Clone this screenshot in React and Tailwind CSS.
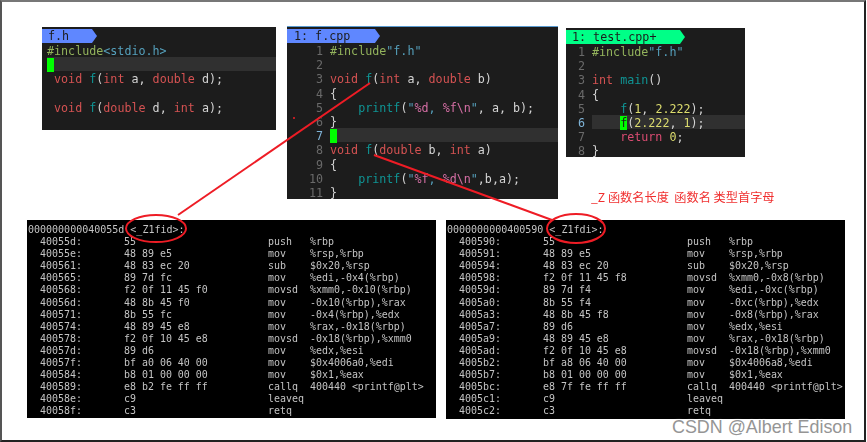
const cn = {
  fn: "text-[#0f9595]",
  kw: "text-[#d45252]",
  inc: "text-[#93b35c]",
  str: "text-[#55a0bc]",
  txt: "text-[#d4d4d4]",
  num: "text-[#dcdc6e]",
  ret: "text-[#dc4c72]",
  pct: "text-[#d46ea4]",
};

function Tab({ label, green, width, inset }) {
  return (
    <div className="flex h-[14px]">
      <div className={`${green ? "bg-[#00ff87]" : "bg-[#5f87ff]"} ${width} ${inset} h-[14px] text-[#1c1c1c] whitespace-pre`}>{label}</div>
      <div
        className={`h-0 w-0 border-y-[7px] border-l-[5px] border-y-transparent ${
          green ? "border-l-[#00ff87]" : "border-l-[#5f87ff]"
        }`}
      />
    </div>
  );
}

function CodeLine({ num, active, numWidth, parts, cursorLine }) {
  return (
    <div className="flex h-[14.2px] leading-[16px] whitespace-pre">
      {numWidth && (
        <div className={`${numWidth} shrink-0 pr-[7px] text-right ${active ? "text-[#7fb4d8]" : "text-[#6a6a6a]"}`}>
          {num}
        </div>
      )}
      <div className={`flex-1 ${cursorLine ? "bg-[#303030]" : ""}`}>
        {parts &&
          parts.map((p, i) =>
            p.cursor ? (
              <span key={i} className="bg-[#00ff00] text-[#1c1c1c]">
                {p.t}
              </span>
            ) : (
              <span key={i} className={p.c || cn.txt}>
                {p.t}
              </span>
            )
          )}
      </div>
    </div>
  );
}

const p = (t, c) => ({ t, c });
const cursor = (t) => ({ t, cursor: true });

const headerLines = [
  { parts: [p("#include", cn.inc), p("<stdio.h>", cn.str)] },
  { parts: [cursor(" ")], cursorLine: true },
  { parts: [p(" void ", cn.kw), p("f", cn.fn), p("("), p("int", cn.kw), p(" a, "), p("double", cn.kw), p(" d);")] },
  { parts: [] },
  { parts: [p(" void ", cn.kw), p("f", cn.fn), p("("), p("double", cn.kw), p(" d, "), p("int", cn.kw), p(" a);")] },
];

const cppLines = [
  { parts: [p("#include", cn.inc), p('"f.h"', cn.str)] },
  { parts: [] },
  { parts: [p("void ", cn.kw), p("f", cn.fn), p("("), p("int", cn.kw), p(" a, "), p("double", cn.kw), p(" b)")] },
  { parts: [p("{")] },
  { parts: [p("    printf", cn.fn), p("("), p('"', cn.str), p("%d", cn.pct), p(", ", cn.str), p("%f\\n", cn.pct), p('"', cn.str), p(", a, b);")] },
  { parts: [p("}")] },
  { parts: [cursor(" ")], cursorLine: true, active: true },
  { parts: [p("void ", cn.kw), p("f", cn.fn), p("("), p("double", cn.kw), p(" b, "), p("int", cn.kw), p(" a)")] },
  { parts: [p("{")] },
  { parts: [p("    printf", cn.fn), p("("), p('"', cn.str), p("%f", cn.pct), p(", ", cn.str), p("%d\\n", cn.pct), p('"', cn.str), p(",b,a);")] },
  { parts: [p("}")] },
];

const testLines = [
  { parts: [p("#include", cn.inc), p('"f.h"', cn.str)] },
  { parts: [] },
  { parts: [p("int ", cn.kw), p("main", cn.fn), p("()")] },
  { parts: [p("{")] },
  { parts: [p("    "), p("f", cn.fn), p("("), p("1", cn.num), p(", "), p("2.222", cn.num), p(");")] },
  { parts: [p("    "), cursor("f"), p("("), p("2.222", cn.num), p(", "), p("1", cn.num), p(");")], cursorLine: true, active: true },
  { parts: [p("    "), p("return", cn.ret), p(" "), p("0", cn.num), p(";")] },
  { parts: [p("}")] },
];

function VimPanel({ tab, green, tabWidth, tabInset, lines, numWidth, className, bodyClass }) {
  return (
    <div className={`bg-[#1c1c1c] pt-[2px] font-['DejaVu_Sans_Mono',monospace] text-[11.7px] leading-[14px] ${className}`}>
      <Tab label={tab} green={green} width={tabWidth} inset={tabInset} />
      <div className={bodyClass}>
        {lines.map((l, i) => (
          <CodeLine key={i} num={i + 1} numWidth={numWidth} {...l} />
        ))}
      </div>
    </div>
  );
}

const dump1 = [
  ["40055d:", "55", "push", "%rbp"],
  ["40055e:", "48 89 e5", "mov", "%rsp,%rbp"],
  ["400561:", "48 83 ec 20", "sub", "$0x20,%rsp"],
  ["400565:", "89 7d fc", "mov", "%edi,-0x4(%rbp)"],
  ["400568:", "f2 0f 11 45 f0", "movsd", "%xmm0,-0x10(%rbp)"],
  ["40056d:", "48 8b 45 f0", "mov", "-0x10(%rbp),%rax"],
  ["400571:", "8b 55 fc", "mov", "-0x4(%rbp),%edx"],
  ["400574:", "48 89 45 e8", "mov", "%rax,-0x18(%rbp)"],
  ["400578:", "f2 0f 10 45 e8", "movsd", "-0x18(%rbp),%xmm0"],
  ["40057d:", "89 d6", "mov", "%edx,%esi"],
  ["40057f:", "bf a0 06 40 00", "mov", "$0x4006a0,%edi"],
  ["400584:", "b8 01 00 00 00", "mov", "$0x1,%eax"],
  ["400589:", "e8 b2 fe ff ff", "callq", "400440 <printf@plt>"],
  ["40058e:", "c9", "leaveq", ""],
  ["40058f:", "c3", "retq", ""],
];

const dump2 = [
  ["400590:", "55", "push", "%rbp"],
  ["400591:", "48 89 e5", "mov", "%rsp,%rbp"],
  ["400594:", "48 83 ec 20", "sub", "$0x20,%rsp"],
  ["400598:", "f2 0f 11 45 f8", "movsd", "%xmm0,-0x8(%rbp)"],
  ["40059d:", "89 7d f4", "mov", "%edi,-0xc(%rbp)"],
  ["4005a0:", "8b 55 f4", "mov", "-0xc(%rbp),%edx"],
  ["4005a3:", "48 8b 45 f8", "mov", "-0x8(%rbp),%rax"],
  ["4005a7:", "89 d6", "mov", "%edx,%esi"],
  ["4005a9:", "48 89 45 e8", "mov", "%rax,-0x18(%rbp)"],
  ["4005ad:", "f2 0f 10 45 e8", "movsd", "-0x18(%rbp),%xmm0"],
  ["4005b2:", "bf a8 06 40 00", "mov", "$0x4006a8,%edi"],
  ["4005b7:", "b8 01 00 00 00", "mov", "$0x1,%eax"],
  ["4005bc:", "e8 7f fe ff ff", "callq", "400440 <printf@plt>"],
  ["4005c1:", "c9", "leaveq", ""],
  ["4005c2:", "c3", "retq", ""],
];

function Terminal({ title, rows, className }) {
  return (
    <div className={`bg-black pl-[1px] pt-[3px] font-['DejaVu_Sans_Mono',monospace] text-[9.95px] text-[#c4c4c4] whitespace-pre ${className}`}>
      <div className="h-[12.1px] text-[10px] leading-[13px]">{title}</div>
      {rows.map((r) => (
        <div key={r[0]} className="flex h-[12.1px] leading-[13px]">
          <div className="w-[96px] shrink-0 pl-[12px]">{r[0]}</div>
          <div className="w-[144px] shrink-0">{r[1]}</div>
          <div className="w-[42px] shrink-0">{r[2]}</div>
          <div className="shrink-0">{r[3]}</div>
        </div>
      ))}
    </div>
  );
}

export default function App() {
  return (
    <div className="relative h-[442px] w-[867px] overflow-hidden bg-white">
      {/* screenshot frame */}
      <div className="h-[442px] w-[866px] border-2 border-t-[#777] border-r-[#222] border-b-[#222] border-l-[#555] blur-[0.4px]">
        <div className="flex items-start pl-[40px] pt-[25px]">
          <VimPanel
            tab="f.h"
            tabWidth="w-[50px]"
            tabInset="pl-[6px]"
            lines={headerLines}
            bodyClass="pl-[5px]"
            className="h-[103px] w-[234px]"
          />
          <VimPanel
            tab="1: f.cpp"
            tabWidth="w-[88px]"
            tabInset="pl-[7px]"
            lines={cppLines}
            numWidth="w-[43px]"
            className="ml-[11px] -mt-[1px] h-[173px] w-[271px] border-t border-[#5a9bd0]"
          />
          <div className="ml-[8px] flex flex-col">
            <VimPanel
              tab="1: test.cpp+"
              green
              tabWidth="w-[114px]"
              tabInset="pl-[6px]"
              lines={testLines}
              numWidth="w-[26px]"
              className="mt-[1px] h-[129px] w-[179px]"
            />
            <div className="mt-[32px] ml-[25px] whitespace-pre font-['Noto_Sans_CJK_SC',sans-serif] text-[12.2px] leading-[16px] text-[#f03030]">
              _Z 函数名长度  函数名 类型首字母
            </div>
          </div>
        </div>
        <div className="mt-[15px] flex items-start pl-[25px]">
          <Terminal title="000000000040055d <_Z1fid>:" rows={dump1} className="h-[198px] w-[409px]" />
          <Terminal title="0000000000400590 <_Z1fdi>:" rows={dump2} className="ml-[10px] h-[199px] w-[399px]" />
        </div>
      </div>

      {/* red annotations drawn over the screenshot */}
      <svg className="absolute inset-0 h-[442px] w-[867px]" viewBox="0 0 867 442" fill="none">
        <path d="M370 83 L178 215" stroke="#ee1c25" strokeWidth="2" />
        <path d="M374 155 L552 220" stroke="#ee1c25" strokeWidth="2" />
        <ellipse cx="156" cy="228.5" rx="30" ry="13.5" stroke="#ee1c25" strokeWidth="2" />
        <ellipse cx="576" cy="228.5" rx="29" ry="14.5" stroke="#ee1c25" strokeWidth="2" />
        <circle cx="294" cy="118" r="1" fill="#ee1c25" />
      </svg>

      <div className="absolute left-[672px] top-[417px] font-['Liberation_Sans',sans-serif] text-[17.9px] leading-[20px] text-[#959595] [text-shadow:0_0_2px_#fff]">
        CSDN @Albert Edison
      </div>
    </div>
  );
}
